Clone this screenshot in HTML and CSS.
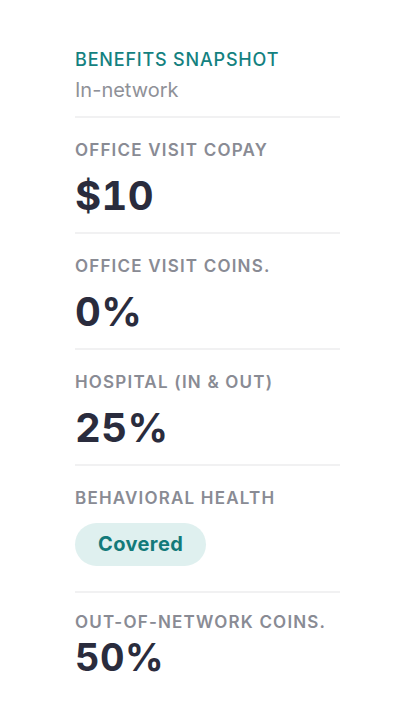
FILE: index.html
```html
<!DOCTYPE html>
<html lang="en">
<head>
  <meta charset="UTF-8" />
  <meta name="viewport" content="width=device-width, initial-scale=1" />
  <title>Benefits Snapshot</title>
  <link rel="stylesheet" href="styles.css">
</head>
<body>
  <div class="snapshot">
    <div class="snapshot-head">
      <h1>BENEFITS SNAPSHOT</h1>
      <p class="network">In-network</p>
    </div>

    <div class="row">
      <div class="label">OFFICE VISIT COPAY</div>
      <div class="value">$10</div>
    </div>
    <div class="row">
      <div class="label">OFFICE VISIT COINS.</div>
      <div class="value">0%</div>
    </div>
    <div class="row">
      <div class="label">HOSPITAL (IN &amp; OUT)</div>
      <div class="value">25%</div>
    </div>
    <div class="row row-pill">
      <div class="label">BEHAVIORAL HEALTH</div>
      <span class="pill">Covered</span>
    </div>
    <div class="row row-last">
      <div class="label">OUT-OF-NETWORK COINS.</div>
      <div class="value">50%</div>
    </div>
  </div>
</body>
</html>
```

FILE: styles.css
```css
body {
  font-family: Inter, 'Noto Sans', sans-serif;
  background: #fff;
  color: #2a2c3d;
  margin: 0;
  padding: 0;
}
.snapshot {
  width: 265px;
  margin: 0 0 0 75px;
  padding-top: 48px;
}
.snapshot-head {
  padding-bottom: 12px;
  border-bottom: 2px solid #f1f1f2;
}
h1 {
  margin: 0;
  font-size: 18px;
  line-height: 24px;
  font-weight: 500;
  letter-spacing: 0.045em;
  color: #13817f;
}
.network {
  margin: 5px 0 0;
  font-size: 20px;
  line-height: 27px;
  color: #8f9198;
}
.row {
  padding: 21px 0 12px;
  border-bottom: 2px solid #f1f1f2;
}
.label {
  font-size: 17px;
  line-height: 22px;
  font-weight: 600;
  letter-spacing: 0.07em;
  color: #898b94;
}
.value {
  margin-top: 11px;
  font-size: 40px;
  line-height: 48px;
  font-weight: 700;
  font-variant-numeric: tabular-nums;
  letter-spacing: 0.01em;
  color: #2a2c3d;
}
.row-pill {
  padding-bottom: 25px;
}
.pill {
  display: inline-block;
  margin-top: 14px;
  padding: 0 23px;
  height: 43px;
  line-height: 43px;
  border-radius: 22px;
  background: #dff0ef;
  color: #137a7a;
  font-size: 20px;
  font-weight: 700;
  letter-spacing: 0.02em;
}
.row-last {
  padding-top: 18px;
  border-bottom: none;
}
.row-last .value {
  margin-top: 0;
  font-size: 38px;
}
```
